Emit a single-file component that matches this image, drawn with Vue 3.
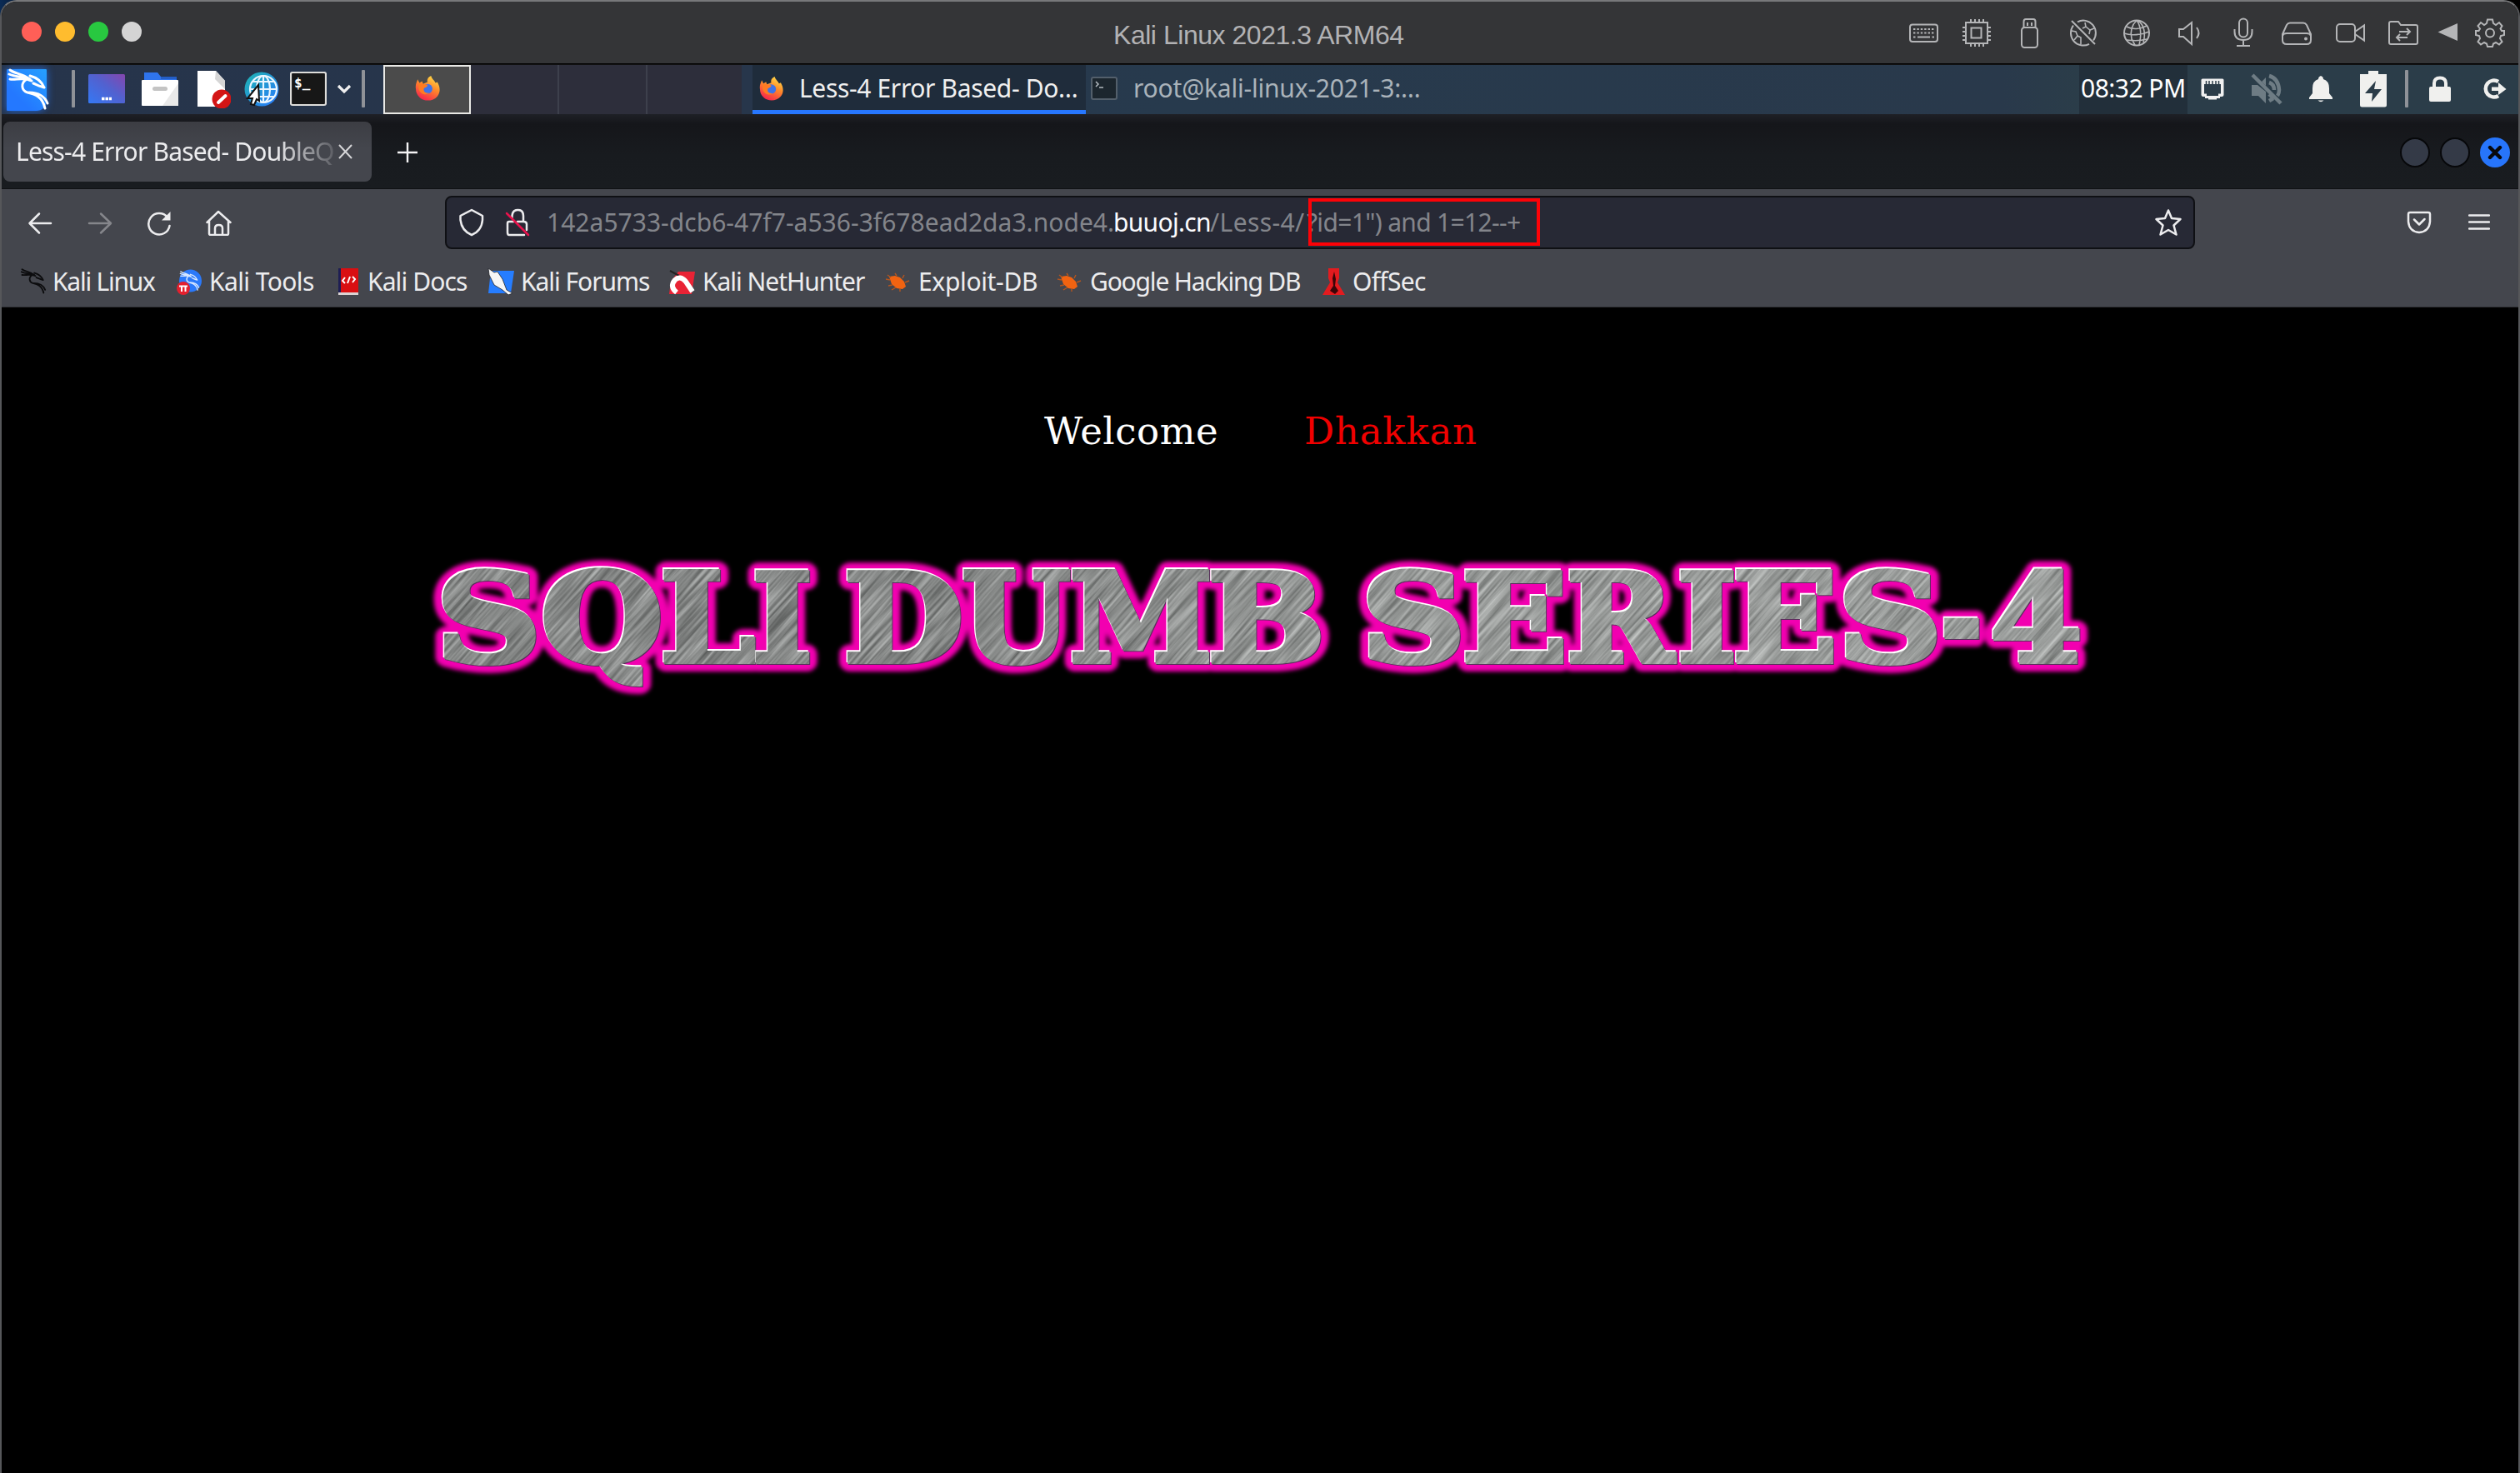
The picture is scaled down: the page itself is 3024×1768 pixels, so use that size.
<script setup>
const ctx = document.createElement('canvas').getContext('2d')

const FONTS = {
  ui: '"Noto Sans"',
  title: '"Liberation Sans"',
  page: '"DejaVu Serif"',
}

// Letter-spacing and optical indent that make a label span a given ink width.
function fit(text, width, size = 30, family = 'ui') {
  ctx.font = `${size}px ${FONTS[family]}`
  const m = ctx.measureText(text)
  const ink = m.actualBoundingBoxLeft + m.actualBoundingBoxRight
  return {
    width: `${width}px`,
    textIndent: `${m.actualBoundingBoxLeft}px`,
    letterSpacing: `${(width - ink) / (text.length - 1)}px`,
  }
}

const bookmarks = [
  { icon: 'dragon', label: 'Kali Linux', w: 122, gap: 9 },
  { icon: 'tools', label: 'Kali Tools', w: 124, gap: 10 },
  { icon: 'docs', label: 'Kali Docs', w: 118, gap: 9 },
  { icon: 'forums', label: 'Kali Forums', w: 153, gap: 10 },
  { icon: 'hunter', label: 'Kali NetHunter', w: 193, gap: 11 },
  { icon: 'bug', label: 'Exploit-DB', w: 140, gap: 11 },
  { icon: 'bug', label: 'Google Hacking DB', w: 251, gap: 10 },
  { icon: 'offsec', label: 'OffSec', w: 87, gap: 8 },
]

const HEAD_SIZE = 147
const STROKE = 6
const headline = [
  ['S', 531, 643], ['Q', 653, 792], ['L', 796, 907], ['I', 906, 972],
  ['D', 1016.5, 1153], ['U', 1156.5, 1284], ['M', 1287, 1451], ['B', 1453, 1585],
  ['S', 1641, 1752], ['E', 1758, 1876], ['R', 1883, 2013], ['I', 2016, 2081],
  ['E', 2083, 2200], ['S', 2213, 2324], ['-', 2332, 2376], ['4', 2392, 2496],
].map(([char, from, to]) => {
  ctx.font = `bold ${HEAD_SIZE}px "DejaVu Serif"`
  const m = ctx.measureText(char)
  const sx = (to - from - STROKE) / (m.actualBoundingBoxLeft + m.actualBoundingBoxRight)
  return { char, transform: `translate(${from + STROKE / 2 - 500 + m.actualBoundingBoxLeft * sx} 153.5) scale(${sx} 1)` }
})
</script>

<template>
  <div class="desktop">
    <div class="window">
      <svg class="defs" width="0" height="0">
        <defs>
          <symbol id="kali" viewBox="0 0 52 52">
            <g fill="none" stroke-width="3" stroke-linecap="round" stroke-linejoin="round">
              <path d="M4 2C9 6 15 6 21 9L28 13M3 7C9 10 16 10 22 11M4 13C9 14 15 12 22 13M28 9C36 11 42 16 45 23M45 23C41 22 37 20 32 18" />
              <path d="M24 13C16 18 18 27 25 29C34 31 43 34 46 48M27 29C38 29 46 34 49 42M24 13L30 15" />
            </g>
          </symbol>
          <linearGradient id="fxBody" x1=".8" y1="0" x2=".3" y2="1">
            <stop offset="0" stop-color="#ffe14a" /><stop offset=".45" stop-color="#ff8a2a" /><stop offset="1" stop-color="#f5214d" />
          </linearGradient>
          <symbol id="firefox" viewBox="0 0 28 28">
            <path d="M1 15C0 10 2 7 3 4L5 8L8 6L9 9L14 7C13 4 15 1 18 0C19 4 22 5 23 8L25 7C28 12 29 18 25 23C20 29 10 29 5 24C2 21 1 18 1 15Z" fill="url(#fxBody)" />
            <circle cx="14" cy="14.5" r="5.5" fill="#3f73e8" />
            <path d="M4 9C8 8 10 10 14 10C14 13 11 13 10 14C9 18 12 20 16 19C12 23 5 20 4 14Z" fill="#ff7b22" />
          </symbol>
          <symbol id="bug" viewBox="0 0 32 32">
            <path d="M6 10L13 9L19 11L24 16L26 22L22 25L15 24L9 19Z" fill="#f26311" />
            <path d="M8 11L4 8M7 14L2 13M10 20L5 21M14 23L9 26M19 24L19 28M25 17L30 15M22 12L24 8M15 9L13 6" stroke="#b4551f" stroke-width="1.4" fill="none" />
          </symbol>
        </defs>
      </svg>

      <header class="titlebar">
        <div class="lights"><i class="red" /><i class="amber" /><i class="green" /><i class="grey" /></div>
        <span class="vm-title" :style="fit('Kali Linux 2021.3 ARM64', 348, 32, 'title')">Kali Linux 2021.3 ARM64</span>
        <div class="vm-icons">
          <svg viewBox="0 0 40 40"><rect x="4" y="9.5" width="33" height="20.5" rx="3" /><path d="M8 15H34M8 19.5H34" stroke-dasharray="2.4 2" /><path d="M8 24.5H10.5M13 24.5H28M30.5 24.5H33" /></svg>
          <svg viewBox="0 0 40 40"><rect x="7" y="7" width="26" height="25" /><rect x="13.500" y="13.500" width="12" height="12" /><path d="M13 7V3M18 7V3M23 7V3M28 7V3M13 36V32M18 36V32M23 36V32M28 36V32M3 13H7M3 18H7M3 23H7M3 28H7M33 13H37M33 18H37M33 23H37M33 28H37" /></svg>
          <svg viewBox="0 0 40 40"><path d="M12.500 13V6Q12.500 3 15 3H24Q26.500 3 26.500 6V13" /><rect x="10" y="13" width="19" height="24" rx="3.500" /><path d="M17 7V11M22 7V11" /></svg>
          <svg viewBox="0 0 40 40"><path d="M13 6.300A15 15 0 0 1 32 28.500M8 10.500A15 15 0 0 0 27 32.800M6 5L34 33" /><path class="thin" d="M19 14L23 12L22 7M23 12L28 16L33 14M28 16L27 21M6 17L11 18L13 23L9 28M13 23L17 25L17 33" /></svg>
          <svg viewBox="0 0 40 40"><circle cx="20" cy="19.500" r="15" /><path class="thin" d="M20 4.500C14 10 12 18 14 27L18 34M20 4.500C25 11 26 21 23 34M22 5C29 10 31 20 28 31M8 12C15 16 25 15 32 11M5 20C13 23 26 22 35 18M8 28C15 29 25 29 32 27" /></svg>
          <svg viewBox="0 0 40 40"><path d="M7 15H12L22 7V33L12 24H7ZM28 13Q33 19.500 28 26" /></svg>
          <svg viewBox="0 0 40 40"><rect x="15" y="2.500" width="10" height="22" rx="5" /><path d="M9.500 15V18Q9.500 28 20 28Q30.500 28 30.500 18V15M20 28V34M12 35H28" /></svg>
          <svg viewBox="0 0 40 40"><path d="M3 21L8 10Q9.500 7.500 12 7.500H28Q30.500 7.500 32 10L37 21V28Q37 33 32 33H8Q3 33 3 28ZM3 23Q4 20 8 20H32Q36 20 37 23" /><circle cx="31" cy="26.500" r="1" /></svg>
          <svg viewBox="0 0 40 40"><rect x="4" y="9" width="22" height="21" rx="4" /><path d="M26 18L37 10.500V28.500L26 21" /></svg>
          <svg viewBox="0 0 40 40"><path d="M3 8Q3 6 5 6H14L17 10H35Q37 10 37 12V31Q37 33 35 33H5Q3 33 3 31Z" /><path d="M15 18H28M24 14L28 18L24 22M25 25H12M16 21L12 25L16 29" /></svg>
          <svg class="tri" viewBox="0 0 40 40"><path class="solid" d="M10 18.500L30 9.500V27.500Z" /></svg>
          <svg class="gear" viewBox="0 0 40 40"><path d="M17 3.500H23L24 8L27 10L31 7L34.500 11L32.500 14.500L34 17L37 17V22L33 23L32 26L34.500 30L31 33.500L27 31L24 32.500L23 36H17L16 32.500L13 31L9 33.500L5.500 30L8 26L7 23L3 22V17L6.500 17L8 14.500L5.500 11L9 7L13 10L16 8Z" /><circle cx="20" cy="19.500" r="5" /></svg>
        </div>
      </header>

      <div class="panel">
        <div class="kali-menu"><svg width="52" height="52" stroke="#fff"><use href="#kali" /></svg></div>
        <i class="bar first" />
        <div class="launchers">
          <svg width="44" height="44" viewBox="0 0 44 44"><defs><linearGradient id="desk" x1="0" y1="1" x2="1" y2="0"><stop offset="0" stop-color="#3478f4" /><stop offset=".55" stop-color="#5261cf" /><stop offset="1" stop-color="#8546ae" /></linearGradient></defs><rect y="4" width="44" height="35" rx="1.500" fill="url(#desk)" /><path d="M16 33.500H28" stroke="#fff" stroke-width="3.500" stroke-dasharray="3.500 1" /></svg>
          <svg width="44" height="44" viewBox="0 0 44 44"><path d="M3 12V2H19L23 7H42V12Z" fill="#2f74ec" /><path d="M23 7H42V10H23Z" fill="#245ec6" /><rect y="11" width="44" height="31" rx="1" fill="#fff" /><path d="M44 15L25 42H44Z" fill="#e9e9e9" /><rect x="13" y="19" width="18" height="5" rx="2.500" fill="#c4c4c4" /></svg>
          <svg width="42" height="46" viewBox="0 0 42 46"><path d="M2 1H24L35 13V44H2Z" fill="#fff" /><path d="M24 1L35 13V23L23 11Z" fill="#d6d6d6" /><circle cx="31" cy="35" r="11.500" fill="#d41515" /><path d="M27 39L35.500 31" stroke="#fff" stroke-width="4" stroke-linecap="round" /></svg>
          <svg width="44" height="44" viewBox="0 0 44 44"><defs><linearGradient id="web" x1="0" y1="0" x2="1" y2="1"><stop offset="0" stop-color="#1fb5b0" /><stop offset="1" stop-color="#2777ff" /></linearGradient></defs><circle cx="22" cy="22" r="20.500" fill="url(#web)" /><g fill="none" stroke="#eaf6ff" stroke-width="2.200"><circle cx="24" cy="22" r="16" /><ellipse cx="24" cy="22" rx="8" ry="16" /><path d="M24 6V38M8 22H40M11 13H37M11 31H37" /></g><path d="M18 17L5 33L11 33L9 40L13 41L16 34L19 36Z" fill="#fff" stroke="#101010" stroke-width="2" /></svg>
          <svg width="44" height="42" viewBox="0 0 44 42"><rect x="1" y="1" width="42" height="39" rx="2" fill="#171717" stroke="#deddda" stroke-width="2.200" /><text x="5" y="19" class="mono">$_</text></svg>
          <svg width="18" height="12" viewBox="0 0 18 12"><path d="M2 2L9 9L16 2" fill="none" stroke="#f0f0f0" stroke-width="3.200" /></svg>
        </div>
        <i class="bar second" />
        <div class="workspaces">
          <div class="ws active"><svg width="30" height="30"><use href="#firefox" /></svg></div>
          <div class="ws" /><div class="ws" /><div class="ws last" />
        </div>
        <div class="task current">
          <svg width="29" height="29"><use href="#firefox" /></svg>
          <span :style="fit('Less-4 Error Based- Do…', 331)">Less-4 Error Based- Do…</span>
        </div>
        <div class="task">
          <svg width="32" height="28" viewBox="0 0 32 28"><rect x="1" y="1" width="30" height="26" rx="2" fill="#1c262e" stroke="#535f6b" stroke-width="2" /><path d="M6 6L9 9L6 12M10 13H15" stroke="#b3bac0" stroke-width="1.500" fill="none" /></svg>
          <span :style="fit('root@kali-linux-2021-3:…', 341)">root@kali-linux-2021-3:…</span>
        </div>
        <div class="clock"><span :style="fit('08:32 PM', 123)">08:32 PM</span></div>
        <div class="tray">
          <svg width="30" height="28" viewBox="0 0 30 28"><path d="M3 1.500H27Q28.500 1.500 28.500 3V21Q28.500 23 26 23H24V25H20V26.500H10V25H6V23H4Q1.500 23 1.500 21V3Q1.500 1.500 3 1.500Z" fill="#f0f0f0" /><path d="M5 8H25V19.500H22V22H8V19.500H5Z" fill="#2b3c48" /><path d="M7.500 4V9M11 4V9M15 4V9M19 4V9M22.500 4V9" stroke="#2b3c48" stroke-width="1.500" /></svg>
          <svg width="38" height="38" viewBox="0 0 38 38" class="muted"><path class="f" d="M1 14H8L18 22V36L9 27H1ZM13 10L18 5V15Z" /><path d="M2 2L36 36M22 3Q33 6 34 20Q34 24 32 27M22 11Q28 13 28 20M22 25L27 30M22 33L27 30" /></svg>
          <svg width="30" height="32" viewBox="0 0 30 32"><path d="M15 0Q18 1 18 4Q25 6 25 15V21L29 26V28H1V26L5 21V15Q5 6 12 4Q12 1 15 0ZM11.500 29.500H18.500Q15 33 11.500 29.500Z" fill="#f0f0ee" /></svg>
          <svg width="32" height="44" viewBox="0 0 32 44"><path d="M10 0H22V4H32V41Q32 43.500 29.500 43.500H2.500Q0 43.500 0 41V4H10Z" fill="#f0f0ee" /><path d="M19 12L6 27H15L14 37L26 22H17Z" fill="#2b3c48" /></svg>
          <i class="bar" />
          <svg width="26" height="32" viewBox="0 0 26 32"><path d="M6 14V9Q6 2.500 13 2.500Q20 2.500 20 9V14" fill="none" stroke="#f0f0ee" stroke-width="4" /><rect y="13" width="26" height="18" rx="2" fill="#f0f0ee" /></svg>
          <svg width="29" height="28" viewBox="0 0 29 28"><path d="M19 5A10 10 0 1 0 19 22" fill="none" stroke="#f0f0ee" stroke-width="4.500" /><path d="M11 11.500H19V6L28.500 14L19 21V16H11Z" fill="#f0f0ee" /></svg>
        </div>
      </div>

      <div class="tabs">
        <div class="tab">
          <span class="tab-title" :style="fit('Less-4 Error Based- DoubleQ', 379)">Less-4 Error Based- DoubleQ</span>
          <svg width="17" height="18" viewBox="0 0 17 18"><path d="M1 1L16 17M16 1L1 17" stroke="#d6d6d8" stroke-width="2" /></svg>
        </div>
        <svg class="plus" width="24" height="24" viewBox="0 0 24 24"><path d="M12 0V24M0 12H24" stroke="#f4f4f5" stroke-width="2.400" /></svg>
        <div class="controls"><i /><i /><b><svg width="18" height="18" viewBox="0 0 18 18"><path d="M3 3L15 15M15 3L3 15" stroke="#08090c" stroke-width="4.400" stroke-linecap="round" /></svg></b></div>
      </div>

      <div class="toolbar">
        <div class="nav">
          <svg viewBox="0 0 32 32"><path d="M29 17H4M15 5.500L3.500 17L15 28.500" /></svg>
          <svg viewBox="0 0 32 32" class="dim"><path d="M3 17H28M17 5.500L29 17L17 28.500" /></svg>
          <svg viewBox="0 0 32 32"><path d="M26 10A12.700 12.700 0 1 0 28.500 20" /><path class="solid" d="M29.500 3V13.500H19Z" /></svg>
          <svg viewBox="0 0 32 32"><path d="M1.500 16L15 3L29.500 16M4 14V29.500Q4 31 6 31H25Q27 31 27 29.500V14M11 30V23Q11 19 15.500 19Q20 19 20 23V30" /></svg>
        </div>
        <div class="urlbar">
          <svg class="shield" width="32" height="34" viewBox="0 0 32 34"><path d="M16 2L29 9V14Q28 27 16 32Q4 27 2.500 14V9Z" /></svg>
          <svg class="lock" width="32" height="34" viewBox="0 0 32 34"><path d="M8.500 11V9Q9 2 15.500 2Q22 2 22 9V15M10 16H5Q3 16 3 18V29Q3 32 5 32H23M15 16H22Q26 16 26 19V26" /><path d="M2 6L28 32" class="slash" /></svg>
          <div class="url">
            <span :style="fit('142a5733-dcb6-47f7-a536-3f678ead2da3.node4.', 677)">142a5733-dcb6-47f7-a536-3f678ead2da3.node4.</span>
            <span class="host" :style="fit('buuoj.cn', 114)">buuoj.cn</span>
            <span :style="fit('/Less-4/', 113)">/Less-4/</span>
            <span class="query" :style="fit('?id=1&quot;) and 1=12--+', 256)">?id=1") and 1=12--+</span>
          </div>
          <i class="marker" />
          <svg class="star" width="34" height="34" viewBox="0 0 34 34"><path d="M17 2.500L21 12L31.500 13L23.500 20.500L26.500 31.500L17 26L7.500 31.500L10.500 20.500L2.500 13L13 12Z" /></svg>
        </div>
        <svg class="pocket" width="30" height="28" viewBox="0 0 30 28"><path d="M4 2H26Q28 2 28 4V13Q27 25 15 26Q3 25 2 13V4Q2 2 4 2Z" /><path d="M9 10.500L15 16.500L21.500 10" /></svg>
        <svg class="burger" width="26" height="22" viewBox="0 0 26 22"><path d="M1 2.500H25M1 10.500H25M1 18.500H25" /></svg>
      </div>

      <nav class="bookmarks">
        <div v-for="b in bookmarks" :key="b.label" class="bookmark">
          <svg width="32" height="32" viewBox="0 0 32 32">
            <use v-if="b.icon === 'dragon'" href="#kali" stroke="#0c0c0e" />
            <template v-else-if="b.icon === 'tools'"><circle cx="17.500" cy="15" r="13.500" fill="#2b79fa" /><use href="#kali" x="4" y="3" width="25" height="25" stroke="#d6e6ff" /><circle cx="9" cy="24" r="8" fill="#e3202e" /><path d="M4 21.500H14M7 21V28M11.500 21V28" stroke="#fff" stroke-width="2" /></template>
            <template v-else-if="b.icon === 'docs'"><path d="M4 0H28V29H4Z" fill="#d90f12" /><path d="M4 0H7V29H4Z" fill="#1e1e54" /><path d="M4 29H28V32H4Z" fill="#dad3d3" /><path d="M12 11L9 15L12 18M21 10L24 13L21 17M18 10L15 18" stroke="#fff" stroke-width="2" fill="none" /></template>
            <template v-else-if="b.icon === 'forums'"><path d="M4 3H32L28 30H1Z" fill="#267dff" /><path d="M1 0L8 5L12 4L18 13L23 26L30 30L25 32L18 26L8 20L2 8Z" fill="#f6f6f6" stroke="#22242a" stroke-width=".8" /></template>
            <template v-else-if="b.icon === 'hunter'"><path d="M12 4H32L28 31H1L3 16Z" fill="#e92335" /><path d="M2 3L13 9" stroke="#222" stroke-width="2" /><path d="M10 29Q1 22 8 14Q14 8 21 16L29 28" stroke="#fff" stroke-width="6" fill="none" /></template>
            <use v-else-if="b.icon === 'bug'" href="#bug" />
            <template v-else><path d="M10 0H23V12L21 17L30 32H3L12 17L10 12Z" fill="#e31b1f" /><path d="M17 4L19 13L18 21L22 27L18 31L12 27L16 21L15 12Z" fill="#3a0507" /></template>
          </svg>
          <span :style="[fit(b.label, b.w), { marginLeft: b.gap + 'px' }]">{{ b.label }}</span>
        </div>
      </nav>

      <main class="page">
        <p class="welcome">
          <span :style="fit('Welcome', 207, 45, 'page')">Welcome</span>
          <span class="name" :style="fit('Dhakkan', 204, 45, 'page')">Dhakkan</span>
        </p>
        <svg class="headline" width="2040" height="200" viewBox="0 0 2040 200">
          <defs>
            <filter id="soft" x="-5%" y="-20%" width="110%" height="140%"><feGaussianBlur stdDeviation="2.600" /></filter>
            <filter id="brush" x="0" y="0" width="100%" height="100%" color-interpolation-filters="sRGB"><feTurbulence type="fractalNoise" baseFrequency=".012 .28" numOctaves="2" seed="4" /><feColorMatrix values="1.3 0 0 0 -.13  1.3 0 0 0 -.12  1.3 0 0 0 -.125  0 0 0 0 1" /></filter>
            <linearGradient id="steel" x1="0" x2="1"><stop offset="0" stop-color="#868887" /><stop offset=".3" stop-color="#858786" /><stop offset=".6" stop-color="#a0a3a1" /><stop offset="1" stop-color="#a9acaa" /></linearGradient>
            <g id="word"><text v-for="(l, i) in headline" :key="i" :transform="l.transform" class="glyph">{{ l.char }}</text></g>
            <mask id="letters" maskUnits="userSpaceOnUse" x="0" y="0" width="2040" height="200"><use href="#word" fill="#fff" stroke="#fff" stroke-width="6" /></mask>
          </defs>
          <use href="#word" fill="#f200b0" stroke="#f200b0" stroke-width="24" stroke-linejoin="round" filter="url(#soft)" />
          <use href="#word" x="1" y="1" fill="#57305a" stroke="#57305a" stroke-width="6" />
          <use href="#word" x="-1.500" y="-1.500" fill="#fff" stroke="#fff" stroke-width="6" />
          <g mask="url(#letters)">
            <rect width="2040" height="200" fill="url(#steel)" />
            <g opacity=".38"><rect x="-300" y="-1100" width="2600" height="2400" transform="rotate(-48 1020 100)" filter="url(#brush)" /></g>
          </g>
        </svg>
      </main>
    </div>
  </div>
</template>

<style>
body { background: #000; }
</style>

<style scoped>
.desktop { width: 3024px; height: 1768px; overflow: hidden; background: linear-gradient(90deg, #0b2b55 0, #000 60px); font-family: "Noto Sans", sans-serif; font-size: 30px; line-height: 40px; color: #ececee; }
.window { box-sizing: border-box; width: 3024px; height: 1768px; border: 2px solid #56575a; border-top-color: #77787a; border-bottom: 0; border-radius: 20px 20px 0 0; overflow: hidden; display: flex; flex-direction: column; background: #000; }
.defs { position: absolute; }
span { display: block; white-space: nowrap; flex: none; }
svg { display: block; flex: none; }

.titlebar { height: 75px; background: #343537; display: flex; align-items: center; flex: none; box-sizing: border-box; border-bottom: 1px solid #000; }
.lights { display: flex; gap: 16px; margin: -2px 0 0 24px; width: 144px; }
.lights i { width: 24px; height: 24px; border-radius: 50%; }
.red { background: #ff5f57; } .amber { background: #ffbc2e; } .green { background: #28c840; } .grey { background: #d4d4d4; }
.vm-title { margin-left: 1168px; padding-top: 5px; font: 32px/40px "Liberation Sans", sans-serif; color: #b2b2b4; }
.vm-icons { display: flex; gap: 24px; margin: 1px 0 0 602px; }
.vm-icons svg { width: 40px; height: 40px; fill: none; stroke: #b4b5b7; stroke-width: 2; }
.vm-icons .tri { margin-left: -10px; }
.vm-icons .gear { margin-left: -14px; }
.vm-icons .solid { fill: #b4b5b7; }
.vm-icons .thin { stroke-width: 1.600; }

.panel { height: 60px; box-sizing: border-box; border-top: 1px solid #111; flex: none; display: flex; align-items: center; background: linear-gradient(90deg, #26344b 0, #27364b 900px, #273a4d 1400px, #29394b 2400px, #2b3d49 2500px); }
.kali-menu { margin-left: 6px; width: 48px; height: 50px; background: linear-gradient(45deg, #2478ff 30%, #26a0ff); border-radius: 1px 1px 12px 1px; box-shadow: 0 0 10px #2468d8; display: flex; overflow: visible; }
.kali-menu svg { margin-top: -1px; }
.bar { display: block; width: 4px; height: 45px; background: #8f9298; border-radius: 1px; flex: none; margin-bottom: 2px; }
.bar.first { margin-left: 30px; }
.launchers { display: flex; align-items: center; margin: 0 0 2px 16px; width: 316px; }
.launchers svg:nth-child(2) { margin-left: 20px; }
.launchers svg:nth-child(3) { margin-left: 21px; }
.launchers svg:nth-child(4) { margin-left: 15px; }
.launchers svg:nth-child(5) { margin-left: 12px; }
.launchers svg:nth-child(6) { margin-left: 12px; }
.mono { font: bold 16px "DejaVu Sans Mono", monospace; fill: #fff; }
.bar.second { margin-left: 12px; }
.workspaces { display: flex; align-self: stretch; margin-left: 22px; background: #2d2e3b; width: 430px; }
.ws { box-sizing: border-box; width: 106px; border-right: 2px solid #3d404c; }
.ws.active { width: 105px; border: 2px solid #e9e9e6; background: #4b4b4b; display: flex; align-items: center; justify-content: center; padding-bottom: 3px; }
.ws.last { border: 0; }
.task { align-self: stretch; display: flex; align-items: center; box-sizing: border-box; width: 400px; padding: 0 0 4px 6px; color: #aab3ba; }
.task svg { margin-bottom: -1px; }
.task span { margin-left: 21px; }
.task.current { margin-left: 13px; background: #1f2c3b; border-bottom: 5px solid #2777ff; padding: 1px 0 0 8px; color: #f0f0f0; }
.clock { align-self: stretch; box-sizing: border-box; margin-left: 792px; width: 130px; background: #222f3a; padding: 8px 0 0 3px; color: #fff; }
.tray { display: flex; align-items: center; height: 58px; margin-left: 15px; padding-bottom: 2px; }
.tray svg:nth-child(2) { margin-left: 31px; }
.tray svg:nth-child(3) { margin-left: 31px; }
.tray svg:nth-child(4) { margin-left: 32px; }
.tray .bar { margin: 0 0 0 22px; }
.tray svg:nth-child(6) { margin-left: 25px; }
.tray svg:nth-child(7) { margin-left: 38px; }
.muted { stroke: #6e7c84; stroke-width: 4.500; fill: none; }
.muted .f { fill: #6e7c84; stroke: none; }

.tabs { height: 90px; box-sizing: border-box; flex: none; display: flex; align-items: center; padding-left: 2px; background: linear-gradient(#1e2026 0, #15161a 12px, #181b1f 50px, #191c20); border-bottom: 1px solid #101114; }
.tab { width: 442px; height: 72px; box-sizing: border-box; padding-left: 17px; margin-top: 1px; border-radius: 8px; background: linear-gradient(#3c3d43, #44464d 45%); display: flex; align-items: center; flex: none; }
.tab-title { -webkit-mask-image: linear-gradient(90deg, #000 310px, transparent 392px); mask-image: linear-gradient(90deg, #000 310px, transparent 392px); }
.tab svg { margin: 0 0 0 6px; }
.plus { margin: 3px 0 0 31px; }
.controls { display: flex; gap: 12px; margin: 2px 10px 0 auto; align-items: center; }
.controls i { width: 32px; height: 32px; border-radius: 50%; background: #343a47; border: 2px solid #07080a; }
.controls b { width: 36px; height: 36px; border-radius: 50%; background: #2775fb; display: flex; align-items: center; justify-content: center; }

.toolbar { height: 80px; flex: none; display: flex; align-items: center; background: #44464d; }
.nav { display: flex; gap: 39.500px; margin-left: 30px; width: 502px; }
.nav svg { width: 32px; height: 32px; }
.toolbar svg { fill: none; stroke: #ececee; stroke-width: 2.500; stroke-linejoin: round; stroke-linecap: round; }
.toolbar .dim { stroke: #85868b; }
.toolbar .solid { fill: #ececee; stroke: none; }
.urlbar { position: relative; box-sizing: border-box; width: 2100px; height: 64px; border: 2px solid #0f1014; border-radius: 8px; background: #272935; display: flex; align-items: center; }
.shield { margin-left: 14px; }
.lock { margin-left: 24px; }
.slash { stroke: #e8124c; }
.url { display: flex; margin-left: 20px; color: #83858b; }
.host { margin-left: 3px; color: #fbfbfe; }
.query { margin-left: 3px; }
.marker { position: absolute; left: 1034px; top: 1px; width: 270px; height: 49px; border: 4px solid #fd0207; }
.star { margin-left: auto; margin-right: 13px; }
.pocket { margin-left: 254px; }
.burger { margin-left: 44px; }
.toolbar .burger { stroke-width: 2.500; }

.bookmarks { height: 62px; box-sizing: border-box; flex: none; padding-left: 22px; display: grid; grid-template-columns: 187px 191px 183px 217px 259px 206px 317px 150px; align-items: center; background: #44464d; border-bottom: 1px solid #303136; }
.bookmark { display: flex; align-items: center; }

.page { flex: 1; background: #000; }
.welcome { margin: 122px 0 0 1251px; height: 60px; line-height: 54px; display: flex; font-family: "DejaVu Serif", serif; font-size: 45px; color: #fff; }
.name { margin-left: 107px; color: #f00000; }
.headline { margin: 89px 0 0 498px; overflow: visible; }
.glyph { font: bold 147px "DejaVu Serif", serif; }
</style>
